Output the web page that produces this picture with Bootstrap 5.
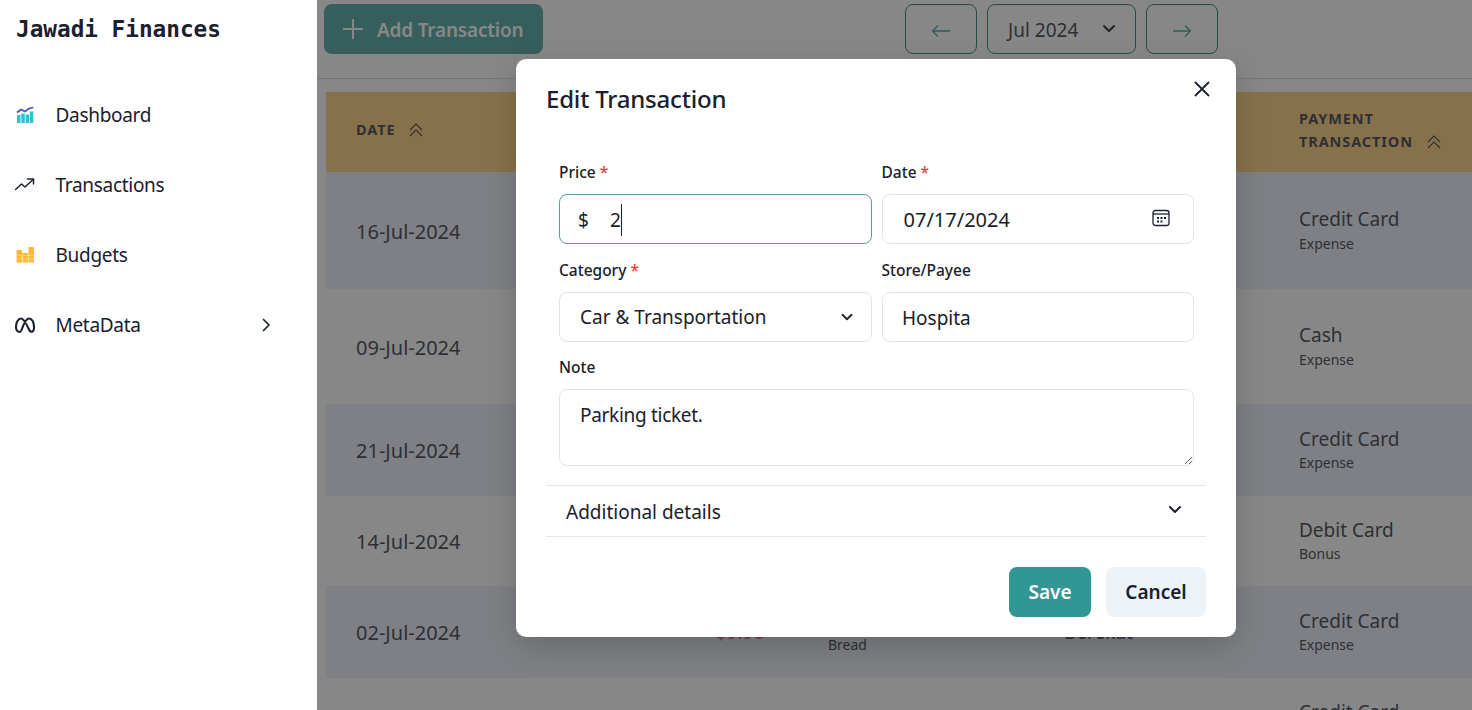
<!DOCTYPE html>
<html lang="en">
<head>
  <meta charset="UTF-8" />
  <meta name="viewport" content="width=device-width, initial-scale=1" />
  <title>Jawadi Finances</title>
  <link href="https://cdn.jsdelivr.net/npm/bootstrap@5.3.0/dist/css/bootstrap.min.css" rel="stylesheet" />
  <script src="https://cdn.jsdelivr.net/npm/bootstrap@5.3.0/dist/js/bootstrap.bundle.min.js"></script>
  <style>
    html, body { height: 710px; overflow: hidden; }
    body {
      font-family: "Noto Sans", "Open Sans", sans-serif;
      color: #1a202c;
      background: #fff;
    }

    /* sidebar */
    .side-panel { width: 317px; flex-shrink: 0; height: 710px; background: #fff; }
    .brand-name {
      font-family: "DejaVu Sans Mono", monospace;
      font-weight: 700;
      font-size: 22.7px;
      line-height: 30px;
      padding: 14px 0 0 16px;
      height: 80px;
      color: #1a202c;
    }
    .side-link {
      height: 70px;
      padding-left: 15px;
      padding-right: 44px;
      font-size: 19px;
      letter-spacing: -.3px;
      color: #1a202c;
      text-decoration: none;
    }
    .side-link .side-icon { width: 20px; height: 20px; margin-right: 20.5px; flex-shrink: 0; }

    /* page behind the modal */
    .main-area { flex-grow: 1; height: 710px; position: relative; overflow: hidden; background: #fff; }
    .tool-bar { height: 79px; border-bottom: 1px solid #cbd5e0; padding: 4px 0 0 7px; }
    .add-btn {
      width: 219px; height: 50px;
      background: #319795; color: #fff; border-radius: 8px;
      font-size: 19px; font-weight: 600; letter-spacing: -.2px;
      padding: 2px 0 0 18px;
      border: 0;
    }
    .add-btn svg { margin-right: 13px; margin-top: -2px; }
    .month-nav { margin-left: 362px; gap: 10px; }
    .month-btn {
      height: 50px; width: 72px;
      border: 1px solid #006d66; border-radius: 8px;
      background: transparent; color: #1a202c;
      padding: 0;
    }
    .month-pick { width: 149px; font-size: 19px; padding: 2px 19px 0 20px; }
    .month-pick svg { margin-top: -2px; }

    .tx-table { margin: 13px 0 0 9px; width: 1146px; table-layout: fixed; --bs-table-bg: transparent; color: #1a202c; font-size: 19px; }
    .tx-table th, .tx-table td { border: 0; padding: 0 0 0 30px; vertical-align: middle; background: transparent; }
    .tx-table th { font-size: 14.5px; font-weight: 700; letter-spacing: .9px; line-height: 23px; padding-bottom: 5px; }
    .head-row { height: 80px; background: #ffc764; }
    .tint-row { background: #e8edfa; }
    .c-date { width: 360px; }
    .c-amount { width: 112px; }
    .c-cat { width: 236px; }
    .c-store { width: 235px; }
    .c-pay { width: 203px; }
    .r-a { height: 117px; } .r-b { height: 115px; } .r-c { height: 92px; }
    .r-d { height: 90px; } .r-e { height: 92px; } .r-f { height: 92px; }
    .tx-table .date-cell { font-size: 20px; padding-top: 2px; }
    .tx-table .pay-cell { padding-bottom: 3px; }
    .tx-table .pay-only { padding-bottom: 23px; }
    .sub-line { display: block; font-size: 14px; line-height: 19px; }
    .amount-out { color: #e53e3e; }
    .sort-mark { width: 16px; height: 16px; margin-left: 8px; vertical-align: -3px; }

    .dim-layer { position: absolute; inset: 0; background: rgba(57, 57, 57, .606); }

    /* modal */
    .edit-box {
      position: absolute; left: 199px; top: 59px;
      width: 720px; height: 578px;
      background: #fff; border-radius: 10px;
      box-shadow: 0 10px 30px rgba(0, 0, 0, .18);
      padding: 0 30px;
    }
    .box-head { height: 85px; padding-top: 19px; }
    .box-head h5 { font-size: 24px; font-weight: 500; letter-spacing: -.2px; margin: 0; line-height: 42px; color: #1a202c; }
    .box-close { position: absolute; top: 21px; right: 25px; background: none; border: 0; padding: 0; line-height: 0; }
    .fields { padding: 17px 12px 0 13px; }
    .field-row { --bs-gutter-x: 10px; --bs-gutter-y: 0; margin-bottom: -1px; }
    .field-label { font-size: 15.5px; font-weight: 500; margin: 0 0 11px; line-height: 22px; display: block; color: #1a202c; }
    .req { color: #e53e3e; }
    .field-wrap { margin-bottom: 15px; }
    .field-box {
      height: 50px; border: 1px solid #e2e4e8; border-radius: 8px; font-size: 19px;
      color: #1a202c; background-color: #fff; box-shadow: none;
    }
    .field-box.form-control { padding: 2px 20px 0 19.5px; }
    .field-box.form-select { padding: 0 40px 0 20px; background-position: right 16px center; background-size: 16px 12px; --bs-form-select-bg-img: none; background-image: url("data:image/svg+xml,%3csvg xmlns='http://www.w3.org/2000/svg' viewBox='0 0 16 16'%3e%3cpath fill='none' stroke='%231a202c' stroke-linecap='round' stroke-linejoin='round' stroke-width='2.4' d='m2 5 6 6 6-6'/%3e%3c/svg%3e"); }
    .price-box { border-color: #5a9f9b; padding: 2px 18px 0; }
    .price-val { margin-left: 21px; border-right: 1px solid #1a202c; line-height: 32px; padding-right: 0; }
    .date-box { padding: 2px 23px 0 21px; font-size: 20px; }
    .date-box svg { margin-top: -4px; }
    .note-box { height: 77px; font-size: 19px; letter-spacing: -.3px; padding: 11px 20px; border: 1px solid #e2e4e8; border-radius: 8px; color: #1a202c; box-shadow: none; }
    .more-row {
      height: 52px; margin-top: 19px; padding: 2px 24px 0 20px;
      border-top: 1px solid #e2e8f0; border-bottom: 1px solid #e2e8f0;
      font-size: 19px;
    }
    .more-row svg { margin-top: -4px; }
    .box-foot { margin-top: 30px; gap: 15px; }
    .save-btn, .cancel-btn { height: 50px; border: 0; border-radius: 8px; font-size: 19px; font-weight: 600; padding: 1px 0 0; }
    .save-btn { width: 82px; background: #319795; color: #fff; }
    .cancel-btn { width: 100px; background: #edf2f7; color: #1a202c; }
  </style>
</head>
<body>
  <div class="d-flex">
    <!-- sidebar -->
    <aside class="side-panel">
      <div class="brand-name">Jawadi Finances</div>
      <nav class="d-flex flex-column">
        <a href="#" class="side-link d-flex align-items-center">
          <svg class="side-icon" viewBox="0 0 20 20"><g fill="#2dc2d6"><rect x="2" y="10" width="3.500" height="8"/><rect x="6.300" y="8.500" width="3.500" height="9.500"/><rect x="10.600" y="9.500" width="3.500" height="8.500"/><rect x="14.800" y="6.500" width="3.500" height="11.500"/></g><path d="M2 7.500l4-3 4 2 4-3 4.300-1" fill="none" stroke="#4a4fb5" stroke-width="1.700"/></svg>
          Dashboard
        </a>
        <a href="#" class="side-link d-flex align-items-center">
          <svg class="side-icon" viewBox="0 0 20 20" fill="none" stroke="#1a202c" stroke-width="1.500" stroke-linecap="round" stroke-linejoin="round"><path d="M0.500 14.500l6-5.500 3.500 3 8-7.500"/><path d="M12.500 4h6v5"/></svg>
          Transactions
        </a>
        <a href="#" class="side-link d-flex align-items-center">
          <svg class="side-icon" viewBox="0 0 20 20"><g fill="#fdb934"><rect x="1.500" y="5" width="5.500" height="12.500" rx=".6"/><rect x="7.500" y="8" width="5.500" height="9.500" rx=".6"/><rect x="13.500" y="2" width="5.500" height="15.500" rx=".6"/></g><path d="M1.500 10.500h17.500M1.500 14h17.500" stroke="#fff" stroke-opacity=".45" stroke-width=".8"/></svg>
          Budgets
        </a>
        <a href="#" class="side-link d-flex align-items-center">
          <svg class="side-icon" viewBox="0 0 20 20" fill="none" stroke="#1a202c" stroke-width="2.100"><path d="M4.800 17C2.400 17 1 15 1 12 1 7.500 3.300 3.500 6 3.500c3.200 0 5.500 6 7.500 10 .8 1.800 1.800 3.300 3 3.300 1.600 0 2.500-2 2.500-4.800 0-4.500-2-8.500-4.800-8.500C10.500 3.500 8.500 10 7.300 13c-.9 2.500-1.500 4-2.500 4z"/></svg>
          <span class="flex-grow-1">MetaData</span>
          <svg width="14" height="14" viewBox="0 0 14 14" fill="none" stroke="#1a202c" stroke-width="1.700" stroke-linecap="round" stroke-linejoin="round"><path d="M4.500 1.500 10 7l-5.500 5.500"/></svg>
        </a>
      </nav>
    </aside>

    <!-- page content, dimmed by the modal -->
    <main class="main-area">
      <div class="tool-bar d-flex">
        <button class="add-btn d-flex align-items-center" type="button">
          <svg width="22" height="22" viewBox="0 0 22 22" fill="none" stroke="#fff" stroke-width="2"><path d="M11 1v20M1 11h20"/></svg>
          Add Transaction
        </button>
        <div class="month-nav d-flex">
          <button class="month-btn" type="button"><svg width="20" height="14" viewBox="0 0 20 14" fill="none" stroke="#1f8f88" stroke-width="1.300"><path d="M19 7H1.500M7 1.500 1.500 7 7 12.500"/></svg></button>
          <button class="month-btn month-pick d-flex align-items-center justify-content-between" type="button">
            Jul 2024
            <svg width="14" height="10" viewBox="0 0 14 10" fill="none" stroke="#000" stroke-width="2" stroke-linecap="round" stroke-linejoin="round"><path d="m2 2 5 5 5-5"/></svg>
          </button>
          <button class="month-btn" type="button"><svg width="20" height="14" viewBox="0 0 20 14" fill="none" stroke="#1f8f88" stroke-width="1.300"><path d="M1 7h17.500M13 1.500 18.500 7 13 12.500"/></svg></button>
        </div>
      </div>

      <table class="table tx-table mb-0">
        <colgroup><col class="c-date"><col class="c-amount"><col class="c-cat"><col class="c-store"><col class="c-pay"></colgroup>
        <thead>
          <tr class="head-row">
            <th>DATE <svg class="sort-mark" viewBox="0 0 16 16" fill="none" stroke="#1a202c" stroke-width="1.100"><path d="M2 8l6-6 6 6M2 14l6-6 6 6"/></svg></th>
            <th></th><th></th><th></th>
            <th>PAYMENT<br>TRANSACTION <svg class="sort-mark" viewBox="0 0 16 16" fill="none" stroke="#1a202c" stroke-width="1.100"><path d="M2 8l6-6 6 6M2 14l6-6 6 6"/></svg></th>
          </tr>
        </thead>
        <tbody>
          <tr class="tint-row r-a"><td class="date-cell">16-Jul-2024</td><td></td><td></td><td></td><td class="pay-cell">Credit Card<span class="sub-line">Expense</span></td></tr>
          <tr class="r-b"><td class="date-cell">09-Jul-2024</td><td></td><td></td><td></td><td class="pay-cell">Cash<span class="sub-line">Expense</span></td></tr>
          <tr class="tint-row r-c"><td class="date-cell">21-Jul-2024</td><td></td><td></td><td></td><td class="pay-cell">Credit Card<span class="sub-line">Expense</span></td></tr>
          <tr class="r-d"><td class="date-cell">14-Jul-2024</td><td></td><td></td><td></td><td class="pay-cell">Debit Card<span class="sub-line">Bonus</span></td></tr>
          <tr class="tint-row r-e"><td class="date-cell">02-Jul-2024</td><td class="amount-out">$9.98</td><td class="pay-cell">Food<span class="sub-line">Bread</span></td><td>Berekat</td><td class="pay-cell">Credit Card<span class="sub-line">Expense</span></td></tr>
          <tr class="r-f"><td></td><td></td><td></td><td></td><td class="pay-only">Credit Card</td></tr>
        </tbody>
      </table>

      <div class="dim-layer"></div>

      <!-- modal -->
      <div class="edit-box">
        <div class="box-head"><h5>Edit Transaction</h5></div>
        <button class="box-close" type="button" aria-label="Close">
          <svg width="18" height="18" viewBox="0 0 18 18" fill="none" stroke="#1a202c" stroke-width="1.800"><path d="M2 2l14 14M16 2 2 16"/></svg>
        </button>
        <form class="fields">
          <div class="row field-row">
            <div class="col-6 field-wrap">
              <label class="field-label">Price <span class="req">*</span></label>
              <div class="field-box price-box d-flex align-items-center"><span>$</span><span class="price-val">2</span></div>
            </div>
            <div class="col-6 field-wrap">
              <label class="field-label">Date <span class="req">*</span></label>
              <div class="field-box date-box d-flex align-items-center justify-content-between">
                <span>07/17/2024</span>
                <svg width="18" height="18" viewBox="0 0 18 18" fill="none" stroke="#1a202c" stroke-width="1.300"><rect x="1" y="1.500" width="16" height="15" rx="2.500"/><path d="M1 5h16"/><g stroke="none" fill="#1a202c"><rect x="5" y="8" width="2" height="2"/><rect x="8.500" y="8" width="2" height="2"/><rect x="12" y="8" width="2" height="2"/><rect x="5" y="11.500" width="2" height="2"/><rect x="8.500" y="11.500" width="2" height="2"/></g></svg>
              </div>
            </div>
            <div class="col-6 field-wrap">
              <label class="field-label">Category <span class="req">*</span></label>
              <select class="form-select field-box"><option>Car &amp; Transportation</option></select>
            </div>
            <div class="col-6 field-wrap">
              <label class="field-label">Store/Payee</label>
              <input type="text" class="form-control field-box" value="Hospita">
            </div>
          </div>
          <label class="field-label">Note</label>
          <textarea class="form-control note-box">Parking ticket.</textarea>
        </form>
        <div class="more-row d-flex align-items-center justify-content-between">
          <span>Additional details</span>
          <svg width="14" height="10" viewBox="0 0 14 10" fill="none" stroke="#1a202c" stroke-width="2" stroke-linecap="round" stroke-linejoin="round"><path d="m2 2 5 5 5-5"/></svg>
        </div>
        <div class="box-foot d-flex justify-content-end">
          <button class="save-btn" type="button">Save</button>
          <button class="cancel-btn" type="button">Cancel</button>
        </div>
      </div>
    </main>
  </div>
</body>
</html>
